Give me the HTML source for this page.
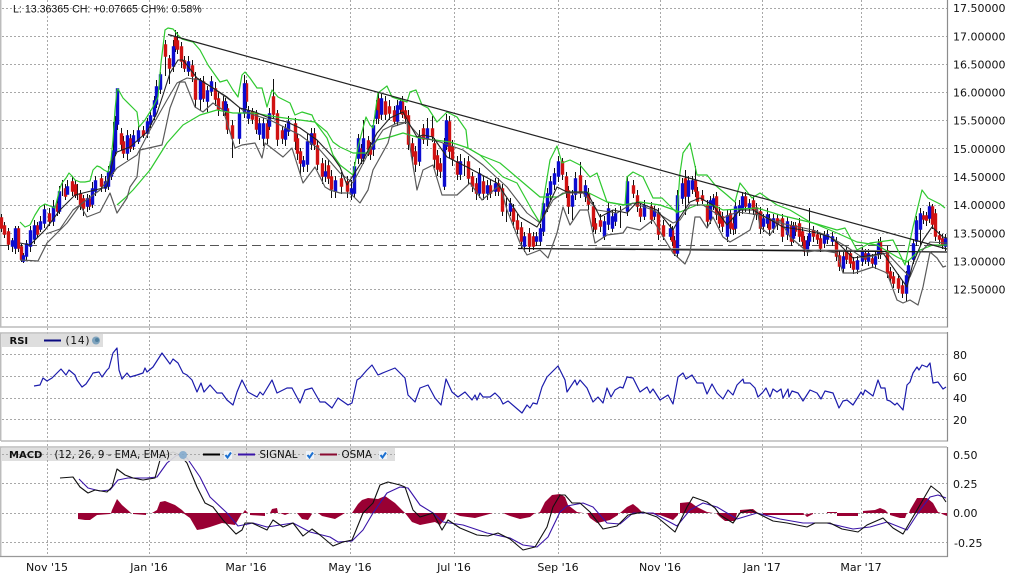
<!DOCTYPE html>
<html><head><meta charset="utf-8"><title>Chart</title>
<style>
html,body{margin:0;padding:0;background:#fff;width:1014px;height:581px;overflow:hidden}
svg{display:block}
text{font-family:"DejaVu Sans",sans-serif;font-size:11px;fill:#111}
.l{fill:none;stroke-linejoin:round}
</style></head><body>
<svg width="1014" height="581" viewBox="0 0 1014 581" xmlns="http://www.w3.org/2000/svg">
<rect width="1014" height="581" fill="#fff"/>
<!-- grid -->
<g stroke="#a8a8a8" stroke-width="1" stroke-dasharray="2 2" fill="none">
<path d="M2 8.5H947M2 36.5H947M2 64.5H947M2 92.5H947M2 120.5H947M2 148.5H947M2 176.5H947M2 205.5H947M2 233.5H947M2 261.5H947M2 289.5H947M2 317.5H947"/>
<path d="M2 354.5H947M2 376.5H947M2 398.5H947M2 419.5H947"/>
<path d="M2 483.5H947M2 513.5H947M2 542.5H947"/>
<path d="M47.5 0V556M149.5 0V556M246.5 0V556M350.5 0V556M454.5 0V556M558.5 0V556M660.5 0V556M762.5 0V556M861.5 0V556"/>
</g>
<!-- panel frames -->
<g fill="none" stroke="#bcbcbc" stroke-width="1.5">
<path d="M0.7 0V327H947"/><path d="M0.7 441V333H947"/><path d="M0.7 556V447H947"/><path d="M1 441H947"/>
</g>
<path d="M0 556.5H948" stroke="#999" stroke-width="1.2"/>
<path d="M947.5 0V327.5M947.5 332V441.5M947.5 447V557" stroke="#8c8c8c" stroke-width="1.2"/>
<!-- dashed level -->
<path d="M0 245.5H947" stroke="#555" stroke-width="1" stroke-dasharray="9 5" fill="none"/>
<!-- candles -->
<g transform="translate(.5 0)" fill="none">
<path stroke="#111" stroke-width="1" d="M1 214V232M4 222V238M8 228V250M12 238V252M15 226V254M18 226V252M21 244V262M23 253V263M26 240V260M30 226V252M34 220V244M37 222V238M40 216V232M44 204V228M49 208V226M53 200V226M57 198V216M59 186V214M62 180V196M65 184V200M67 180V194M72 176V196M75 180V198M77 184V200M80 190V210M83 195V216M87 194V212M89 195V210M92 182V208M95 176V196M101 174V192M105 176V192M108 166V190M111 156V180M113 122V174M115 116V156M117 90V130M121 128V150M123 136V158M127 130V160M130 134V152M133 130V150M138 126V144M143 126V138M147 118V138M150 110V128M154 96V120M156 80V108M160 72V94M165 40V76M169 55V84M173 40V72M175 30V52M177 32V54M181 42V68M184 56V72M188 56V76M192 60V82M195 72V108M200 78V110M203 76V102M207 86V112M211 76V96M215 82V106M218 92V116M223 96V116M225 98V116M227 104V134M232 120V158M239 108V144M244 75V118M246 80V108M248 106V124M252 108V124M256 110V134M259 118V140M263 118V146M267 120V144M269 108V130M273 79V118M277 110V146M282 126V144M285 124V146M288 116V136M295 118V150M297 134V160M300 148V175M303 156V172M307 134V172M311 128V150M314 128V150M317 140V170M322 158V184M325 160V182M328 160V184M331 170V198M335 176V198M341 172V194M347 176V198M351 180V200M354 162V198M358 134V164M361 144V164M363 120V164M368 136V156M370 142V160M373 120V156M376 100V124M378 92V124M381 94V120M385 96V120M389 100V120M394 106V124M397 100V126M400 98V114M402 96V118M405 106V124M408 110V150M412 138V162M415 146V172M419 130V166M423 124V144M427 118V146M432 116V142M434 138V168M437 150V176M440 158V178M444 138V190M446 114V150M449 116V158M452 140V166M457 156V180M460 154V180M464 158V176M468 156V184M472 172V192M476 178V200M479 168V198M483 176V200M487 180V200M490 180V198M495 178V196M498 178V196M502 184V216M506 198V222M510 198V216M513 204V228M517 214V234M521 222V248M524 232V252M529 228V252M533 232V250M536 232V246M540 224V246M543 198V236M547 188V212M550 176V200M554 168V190M558 156V182M562 158V180M566 172V198M568 186V214M572 190V220M575 172V200M580 162V198M585 180V202M588 188V210M593 202V232M595 218V234M600 214V232M604 216V240M608 203V230M612 210V232M615 208V226M620 206V228M627 176V216M633 180V198M637 190V212M640 204V222M644 200V220M651 202V224M654 206V220M658 208V240M663 220V240M670 224V240M672 226V246M674 236V256M677 190V258M682 178V204M685 170V215M688 176V203M692 176V194M695 166V197M697 187V206M702 190V204M707 200V228M710 196V224M713 194V210M716 192V220M719 207V228M722 212V232M727 210V242M730 209V234M733 218V235M735 202V234M739 200V216M742 192V214M745 192V212M749 199V214M753 196V215M756 203V220M760 207V234M763 214V232M767 208V228M769 214V236M773 214V233M777 214V230M782 214V242M787 217V240M791 221V246M793 222V243M795 222V236M799 218V242M802 227V246M804 236V256M807 236V256M809 208V246M813 226V242M817 230V244M820 234V252M824 231V248M827 230V244M832 232V246M836 237V261M839 251V271M843 252V273M846 247V264M850 249V268M853 257V274M857 256V274M862 247V266M865 249V264M868 249V266M872 254V268M875 252V269M878 239V259M880 237V259M887 246V278M890 267V283M893 272V288M898 274V293M902 281V298M906 271V301M908 261V281M913 239V264M916 216V246M920 208V246M923 211V224M926 212V226M929 202V223M932 204V229M935 209V241M939 231V244M942 234V249M945 234V251"/>
<path stroke="#d01212" stroke-width="3.4" stroke-linecap="square" d="M1 219V227M4 227V233M8 233V243M18 230V247M21 248V258M37 227V233M49 215V220M57 205V210M65 190V195M72 183V190M75 186V194M80 195V205M83 200V207M89 200V205M101 180V185M121 135V143M123 143V152M130 140V147M143 132V134M165 46V55M169 60V67M175 38V47M177 42V48M181 48V60M184 62V67M192 67V75M195 80V98M203 83V97M215 90V98M218 100V108M223 103V108M227 110V128M232 127V137M246 85V100M252 113V118M256 115V128M267 125V137M273 98V113M277 115V138M282 132V137M295 125V140M297 140V152M300 153V162M314 135V143M317 147V163M322 165V175M328 167V177M331 178V188M341 180V185M347 183V190M361 150V157M368 142V148M370 148V153M378 100V117M385 103V113M389 108V112M394 112V120M402 103V113M405 112V117M408 117V143M412 145V155M415 153V163M423 130V138M432 130V135M434 145V158M437 157V168M440 165V170M449 123V150M452 148V158M457 163V173M468 163V177M472 178V185M476 185V192M483 183V192M490 187V192M498 185V190M502 190V210M513 210V220M517 222V228M521 229V240M529 235V245M533 238V245M562 163V173M566 178V192M568 192V205M580 177V192M588 195V203M593 208V225M595 225V228M600 222V225M633 187V192M637 197V205M640 210V215M651 208V218M658 215V233M663 227V235M672 232V240M674 242V252M685 180V195M695 182V190M697 193V200M702 197V199M707 207V220M716 198V213M719 213V222M722 218V225M730 215V227M733 225V228M745 198V205M753 202V208M756 209V213M760 213V227M769 220V228M777 220V223M782 220V235M791 227V240M795 227V230M799 225V235M802 233V240M804 242V250M813 232V235M817 236V238M820 240V247M836 243V255M839 257V265M846 253V258M850 255V262M853 263V268M865 255V258M872 260V262M880 243V253M887 252V272M890 273V277M893 278V282M898 280V287M902 287V292M923 217V218M926 217V219M932 208V223M935 215V235M939 237V238M942 240V243"/>
<path stroke="#0c0cd0" stroke-width="3.4" stroke-linecap="square" d="M12 242V245M15 230V247M23 257V260M26 245V255M30 232V245M34 227V238M40 223V228M44 211V222M53 208V220M59 193V210M67 188V193M87 200V205M92 190V203M95 182V190M105 183V187M108 173V185M111 163V175M113 152V170M115 123V150M117 90V123M127 137V152M133 137V145M138 132V140M147 123V132M150 117V123M154 102V115M156 88V103M160 76V88M173 48V65M188 63V70M200 82V98M207 92V100M211 83V90M225 103V110M239 115V137M244 85V112M248 112V117M259 125V133M263 125V137M269 115V125M285 130V138M288 123V130M303 162V165M307 143V163M311 135V143M325 173V175M335 182V190M351 190V193M354 168V192M358 140V157M363 140V157M373 127V148M376 112V117M381 100V113M397 107V120M400 103V108M419 138V160M427 130V138M444 145V185M446 122V145M460 163V173M479 175V192M487 187V192M495 185V190M510 205V210M524 238V245M536 238V240M540 230V240M543 205V230M547 195V205M550 183V193M554 175V183M558 163V175M572 197V205M575 180V193M585 187V195M604 223V235M608 210V223M612 218V227M615 215V220M627 183V210M644 207V215M654 212V215M670 230V235M677 197V252M682 185V197M688 182V195M692 182V188M710 202V218M713 200V205M727 217V235M735 208V227M739 207V209M742 198V207M749 205V207M763 220V225M767 216V222M773 220V227M787 223V233M793 228V237M807 242V250M809 235V240M824 237V242M827 236V238M832 238V240M843 258V267M857 262V268M862 253V260M868 255V260M875 258V263M878 245V253M906 277V292M908 267V275M913 245V258M916 222V240M920 215V228M929 208V217M945 240V245"/>
</g>
<!-- horizontal support -->
<path d="M595 248.5L880 251" stroke="#999" stroke-width="2" fill="none"/>
<path d="M518 248.5L947 252" stroke="#111" stroke-width="1.2" fill="none"/>
<!-- green long MA -->
<polyline class="l" stroke="#2fc92f" stroke-width="1.2" points="117,205 125,198 133,190 150,170 167,143 183,125 200,115 217,110 233,113 253,113 277,117 300,120 315,122 327,132 333,142 340,147 353,153 367,153 377,140 390,137 403,133 420,138 450,142 468,148 480,155 500,163 520,180 540,197 557,197 567,192 587,192 607,202 623,205 640,202 660,205 680,212 697,205 713,205 723,210 757,208 780,215 813,223 837,233 857,242 877,245 897,257 907,262 920,250 933,245 947,245"/>
<!-- green upper band -->
<polyline class="l" stroke="#2fc92f" stroke-width="1.2" points="20,222 25,227 30,225 35,215 40,207 45,204 50,206 55,208 60,188 62,183 66,178 69,173 72,176 75,180 80,182 85,182 90,181 93,170 97,166 100,167 104,170 108,172 111,160 113,140 115,110 117,90 118,89 123,98 133,108 137,112 139,127 145,120 153,107 158,97 161,63 165,30 168,28 173,29 178,35 182,39 193,42 200,50 208,65 220,82 227,80 233,90 238,97 242,75 245,72 250,78 257,88 262,88 267,107 272,90 278,97 290,103 295,115 302,112 312,115 315,122 327,138 333,155 340,165 353,175 358,147 363,128 366,117 370,125 373,128 378,93 387,86 392,97 407,102 410,92 416,90 422,105 428,108 437,122 447,112 457,117 466,130 468,148 480,155 503,177 517,183 532,210 540,223 543,203 550,160 557,146 562,163 570,160 580,165 590,177 597,173 607,202 625,205 627,177 633,172 643,177 653,198 662,198 677,213 680,173 683,153 690,143 697,175 707,175 715,185 727,195 735,202 740,183 752,198 760,193 777,205 790,210 810,222 837,230 845,228 857,250 870,243 893,240 905,265 913,227 922,190 928,198 940,204 945,208"/>
<!-- lower band -->
<polyline class="l" stroke="#5a5a5a" stroke-width="1.2" points="20,260 38,261 47,243 67,223 80,205 87,217 100,212 110,193 117,213 127,198 130,187 137,177 140,150 162,145 170,108 180,82 185,82 195,107 203,112 213,103 223,110 235,148 242,145 255,143 262,158 265,143 283,157 292,148 303,183 315,167 325,187 330,190 340,193 350,193 360,203 368,190 373,170 388,143 392,127 407,122 410,147 417,190 423,170 433,165 442,195 457,195 470,183 482,200 500,185 507,210 520,243 527,255 540,250 548,258 557,233 563,207 570,225 580,210 588,210 595,243 607,235 623,233 627,227 640,230 653,220 662,235 673,253 685,264 690,253 695,217 700,217 707,228 713,217 723,237 730,242 742,235 750,230 757,208 760,227 770,235 780,220 790,237 803,248 807,252 820,250 837,253 843,273 855,273 873,267 887,273 897,300 903,303 910,300 918,305 923,287 930,252 937,258 943,267 946,266"/>
<!-- mid grey -->
<polyline class="l" stroke="#555" stroke-width="1.1" points="46,234 60,229 73,210 100,190 117,168 137,155 150,130 167,100 177,83 187,78 200,80 213,88 230,100 245,112 270,120 300,135 320,150 340,173 353,183 370,150 383,130 397,123 407,122 420,137 440,142 463,150 483,165 507,187 527,213 540,223 553,200 563,193 583,193 597,210 617,213 633,203 653,210 673,223 680,220 690,205 703,205 723,218 737,212 760,215 780,223 813,230 830,237 847,247 863,258 887,253 900,267 910,277 920,253 930,242 947,243"/>
<!-- fast MA -->
<polyline class="l" stroke="#222" stroke-width="1.1" points="20,243 30,245 45,230 60,210 75,195 107,187 113,160 117,152 130,147 147,132 157,113 163,95 170,73 178,60 183,60 197,78 213,88 227,97 240,108 255,112 267,117 287,122 300,128 317,140 333,157 340,167 347,185 363,160 377,133 390,118 403,112 410,125 417,137 423,135 433,137 447,157 467,167 497,183 520,217 537,227 543,217 557,187 567,192 587,192 600,217 613,210 627,213 637,202 657,210 673,230 680,217 690,202 700,198 713,205 727,225 740,210 753,210 767,218 783,227 803,230 817,233 830,237 840,245 853,258 873,255 883,253 897,273 907,287 913,263 923,240 932,227 943,237 947,238"/>
<!-- trendline -->
<path d="M168 34.5L947 249" stroke="#222" stroke-width="1.2" fill="none"/>
<!-- RSI -->
<polyline class="l" stroke="#1c1cac" stroke-width="1.2" points="34,386 40,385 43,378 47,381 52,378 55,375 61,369 66,375 69,370 75,375 77,380 82,387 86,384 90,378 93,373 99,372 102,377 107,370 109,368 113,353 117,348 119,370 122,379 127,373 130,377 137,375 143,373 145,368 147,372 153,367 162,353 170,364 173,359 178,363 183,373 187,375 192,380 197,392 201,383 204,392 210,385 217,393 222,393 227,400 233,405 237,392 242,380 248,392 257,397 260,392 263,395 272,380 277,393 287,388 292,388 300,403 305,390 312,388 320,402 325,402 332,408 338,398 348,405 352,403 357,380 360,378 367,370 372,365 378,375 385,372 395,368 405,378 408,395 415,402 420,388 428,385 435,398 441,405 446,379 452,392 458,397 465,392 472,400 475,395 477,400 480,393 483,397 490,397 495,393 500,398 503,404 508,401 522,413 527,405 530,408 533,403 537,404 542,387 547,377 552,372 558,366 565,380 567,392 575,380 577,385 580,380 587,388 593,402 598,397 603,403 607,388 611,397 615,390 620,387 623,388 627,377 633,378 640,392 647,387 650,393 653,389 660,400 668,395 673,404 678,377 683,373 686,379 692,375 697,383 703,383 707,394 712,384 717,393 723,399 728,390 733,395 737,385 743,379 744,383 750,383 755,388 758,397 763,392 766,388 770,397 773,389 777,392 781,389 783,398 788,389 789,397 792,391 798,393 803,401 810,390 817,393 821,399 825,391 833,393 839,408 843,401 847,400 853,405 858,397 861,392 863,395 865,390 873,396 878,380 881,388 885,388 887,400 890,401 895,405 897,403 903,410 907,385 910,382 913,373 917,367 919,370 922,365 927,367 930,363 933,383 938,382 943,389 946,387"/>
<!-- OSMA -->
<g fill="#990033">
<polygon points="78,513 78,519 85,520 90,520 97,515 110,514 111,513"/>
<polygon points="111,513 112,510 117,499 122,505 130,512 131,513"/>
<polygon points="133,513 146,513 146,515 133,514"/>
<polygon points="152,513 157,510 160,502 165,501 175,505 182,510 185,513"/>
<polygon points="183,513 190,518 197,530 203,529 210,527 222,523 235,525 242,513"/>
<polygon points="243,513 245,510 248,513"/>
<polygon points="250,513 265,513 265,516 250,515"/>
<polygon points="270,513 272,509 277,508 278,513"/>
<polygon points="280,513 285,515 290,513"/>
<polygon points="297,513 302,519 308,520 312,514 310,513"/>
<polygon points="318,513 345,513 335,519 322,516"/>
<polygon points="352,513 358,504 362,500 368,498 378,499 385,496 395,503 403,511 405,513"/>
<polygon points="405,513 412,522 420,525 435,522 440,525 445,519 447,513"/>
<polygon points="453,513 493,513 475,518 460,516"/>
<polygon points="503,513 535,513 530,517 520,519 510,516"/>
<polygon points="538,513 540,512 545,502 552,495 560,494 565,497 568,505 577,512 583,513"/>
<polygon points="587,513 590,518 597,523 610,520 618,515 618,513"/>
<polygon points="620,513 627,507 633,504 638,508 643,513"/>
<polygon points="645,513 660,515 673,520 678,515 678,513"/>
<polygon points="680,513 680,503 690,502 697,507 707,512 713,513"/>
<polygon points="716,513 720,517 725,521 735,521 737,513"/>
<polygon points="740,513 740,510 753,509 758,513"/>
<polygon points="763,513 803,513 807,517 813,514 813,513 803,515 763,515"/>
<polygon points="827,513 827,512 837,512 837,513"/>
<polygon points="837,513 858,513 858,516 837,516"/>
<polygon points="863,513 863,511 875,510 880,508 885,510 888,513"/>
<polygon points="890,513 890,515 900,518 905,518 907,513"/>
<polygon points="909,513 910,510 917,498 927,498 933,503 938,512 941,513"/>
<polygon points="941,513 942,514 947,516 947,513"/>
</g>
<!-- MACD lines -->
<polyline class="l" stroke="#3a14a8" stroke-width="1.1" points="79,479 88,488 100,491 110,490 118,480 128,478 147,478 157,477 167,463 177,455 187,458 200,477 210,497 227,513 238,526 253,523 267,527 293,523 310,532 330,537 338,542 352,541 363,530 373,513 387,493 400,487 408,488 420,505 433,513 443,522 463,525 487,533 510,538 523,545 537,547 548,537 560,512 567,506 583,503 593,507 607,523 620,524 633,513 653,513 677,526 690,510 703,503 717,507 737,519 757,513 780,519 803,523 827,523 853,529 870,527 887,522 907,530 920,510 930,497 938,495 946,498"/>
<polyline class="l" stroke="#111" stroke-width="1.1" points="60,478 73,477 80,487 88,493 95,490 107,492 112,487 117,469 125,475 133,478 143,480 155,478 160,460 165,455 173,452 180,455 187,463 197,487 205,503 213,507 223,520 236,534 242,530 245,523 252,523 267,530 273,520 283,527 293,523 303,536 312,529 320,535 333,546 343,542 352,540 363,513 373,503 380,485 388,482 400,485 405,487 413,510 420,517 433,513 442,530 448,520 460,528 477,535 488,536 498,533 510,539 523,550 535,547 547,527 553,507 560,495 565,495 572,503 580,503 590,512 603,529 617,526 628,515 643,512 657,517 675,532 687,507 693,497 707,502 715,508 720,515 733,523 740,513 750,510 757,513 773,521 787,523 807,527 815,523 830,523 842,529 858,532 867,525 883,518 893,528 903,534 917,510 931,486 940,493 946,502"/>
<!-- RSI legend -->
<rect x="2" y="334" width="101" height="13" fill="#dedede"/>
<text x="9.500" y="344" style="font-weight:bold;font-size:10px">RSI</text>
<path d="M44 340.500H61" stroke="#0a0a80" stroke-width="2"/>
<text x="65.500" y="344" style="font-size:10.500px;letter-spacing:.8px">(14)</text>
<circle cx="96" cy="340.500" r="4" fill="#7fa3bd"/><circle cx="97" cy="340" r="2" fill="#4f7f9f"/>
<!-- MACD legend -->
<rect x="2" y="448" width="393" height="13" fill="#dcdcdc" fill-opacity=".92"/>
<g stroke="#a8a8a8" stroke-dasharray="2 2" fill="none"><path d="M47.500 448V461M149.500 448V461M246.500 448V461M350.500 448V461M2 454.500H395"/></g>
<text x="9" y="458" style="font-weight:bold;font-size:10px">MACD</text>
<text x="54.500" y="458" style="font-size:10.300px">(12, 26, 9 - EMA, EMA)</text>
<circle cx="183" cy="455" r="4" fill="#7fa8cc" fill-opacity=".85"/>
<path d="M203 454.500H220" stroke="#000" stroke-width="2"/>
<rect x="224" y="451" width="8" height="8" fill="#eef3f8"/><path d="M225.500 455L227.500 457.500L231 452.500" stroke="#1a6fd0" stroke-width="2" fill="none"/>
<path d="M238 454.500H255" stroke="#3a14a8" stroke-width="2"/>
<text x="259.500" y="458" style="font-size:10.300px">SIGNAL</text>
<rect x="306" y="451" width="8" height="8" fill="#eef3f8"/><path d="M307.500 455L309.500 457.500L313 452.500" stroke="#1a6fd0" stroke-width="2" fill="none"/>
<path d="M320 454.500H337" stroke="#8a0a30" stroke-width="2"/>
<text x="341.500" y="458" style="font-size:10.300px">OSMA</text>
<rect x="379" y="451" width="8" height="8" fill="#eef3f8"/><path d="M380.500 455L382.500 457.500L386 452.500" stroke="#1a6fd0" stroke-width="2" fill="none"/>
<!-- header -->
<text x="13" y="12.500" style='font-family:"Liberation Sans",sans-serif;font-size:10.640px'>L: 13.36365 CH: +0.07665 CH%: 0.58%</text>
<!-- right axis -->
<text x="953" y="12">17.50000</text>
<text x="953" y="40.500">17.00000</text>
<text x="953" y="68.500">16.50000</text>
<text x="953" y="96.500">16.00000</text>
<text x="953" y="124.500">15.50000</text>
<text x="953" y="153">15.00000</text>
<text x="953" y="181">14.50000</text>
<text x="953" y="209">14.00000</text>
<text x="953" y="237.500">13.50000</text>
<text x="953" y="265.500">13.00000</text>
<text x="953" y="293.500">12.50000</text>
<text x="953" y="359">80</text>
<text x="953" y="381">60</text>
<text x="953" y="402">40</text>
<text x="953" y="424">20</text>
<text x="953" y="459">0.50</text>
<text x="953" y="488">0.25</text>
<text x="953" y="517">0.00</text>
<text x="954" y="547">-0.25</text>
<!-- bottom axis -->
<g text-anchor="middle">
<text x="47" y="571">Nov '15</text>
<text x="149" y="571">Jan '16</text>
<text x="246" y="571">Mar '16</text>
<text x="350" y="571">May '16</text>
<text x="454" y="571">Jul '16</text>
<text x="558" y="571">Sep '16</text>
<text x="660" y="571">Nov '16</text>
<text x="762" y="571">Jan '17</text>
<text x="861" y="571">Mar '17</text>
</g>
</svg>
</body></html>
